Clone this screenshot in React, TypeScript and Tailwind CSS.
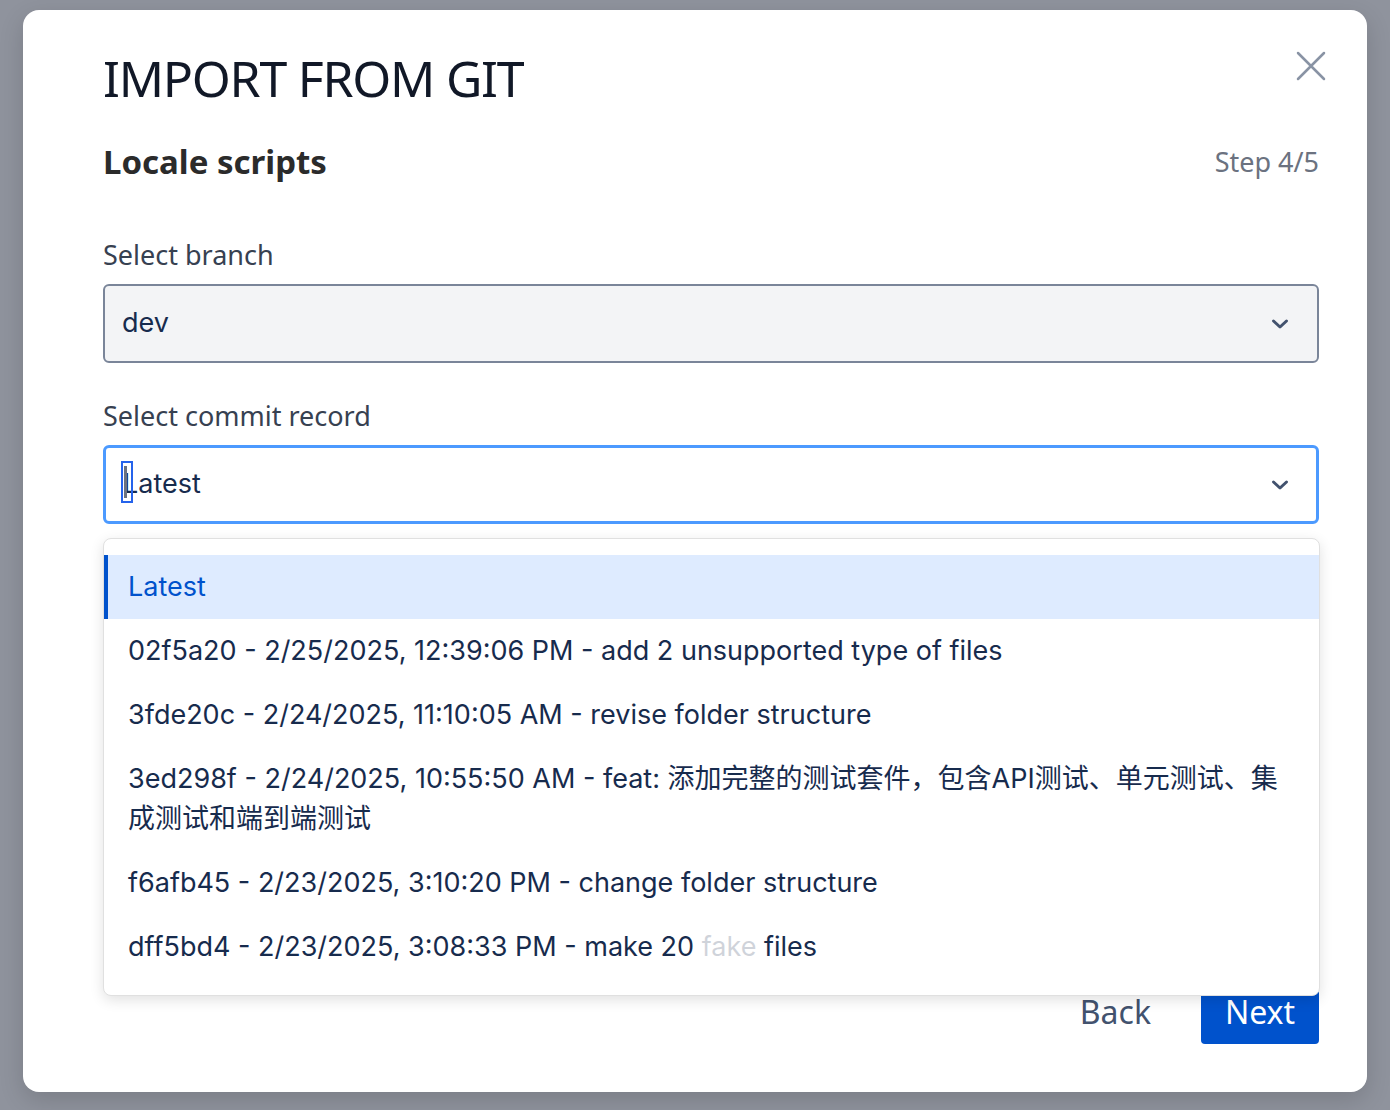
import React from "react";

const commits = [
  { id: "latest", lines: ["Latest"], selected: true },
  { id: "02f5a20", lines: ["02f5a20 - 2/25/2025, 12:39:06 PM - add 2 unsupported type of files"] },
  { id: "3fde20c", lines: ["3fde20c - 2/24/2025, 11:10:05 AM - revise folder structure"] },
  {
    id: "3ed298f",
    lines: [
      "3ed298f - 2/24/2025, 10:55:50 AM - feat: 添加完整的测试套件，包含API测试、单元测试、集",
      "成测试和端到端测试",
    ],
  },
  { id: "f6afb45", lines: ["f6afb45 - 2/23/2025, 3:10:20 PM - change folder structure"] },
];

const heading = { fontFamily: '"Noto Sans", "Open Sans", sans-serif' };
const body = { fontFamily: 'Inter, "Noto Sans CJK SC", sans-serif' };

function Chevron() {
  return (
    <svg width="18" height="12" viewBox="0 0 18 12" className="shrink-0">
      <path d="M2.5 3 L9 9 L15.5 3" fill="none" stroke="#42526e" strokeWidth="3" strokeLinecap="round" strokeLinejoin="round" />
    </svg>
  );
}

export default function App() {
  return (
    <div className="min-h-[1110px] w-[1390px] bg-[#8f939d] pt-[10px] pl-[23px]">
      <div className="relative w-[1344px] h-[1082px] rounded-[16px] bg-white pl-[80px] pr-[48px] pt-[36px] shadow-[0_8px_24px_rgba(0,0,0,0.15)]">
        {/* Close */}
        <button className="absolute right-[40px] top-[40px]">
          <svg width="32" height="32" viewBox="0 0 32 32">
            <path d="M3 3 L29 29 M29 3 L3 29" stroke="#8993a4" strokeWidth="2.5" strokeLinecap="round" />
          </svg>
        </button>

        <h1 style={heading} className="text-[50px] leading-[64px] text-[#111827] tracking-tight">
          IMPORT FROM GIT
        </h1>

        <div className="mt-[32px] flex items-center justify-between">
          <h2 style={heading} className="text-[33px] font-bold text-[#2b2b2b] leading-[40px]">
            Locale scripts
          </h2>
          <span style={heading} className="text-[27px] text-[#6b7280] leading-[40px]">
            Step 4/5
          </span>
        </div>

        {/* Branch */}
        <label style={heading} className="block mt-[53px] text-[27px] leading-[40px] text-[#374151]">
          Select branch
        </label>
        <div className="mt-[9px] h-[79px] rounded-[6px] border-2 border-[#7a8599] bg-[#f3f4f6] flex items-center justify-between pl-[17px] pr-[28px]">
          <span style={body} className="text-[27px] text-[#172b4d]">dev</span>
          <Chevron />
        </div>

        {/* Commit */}
        <label style={heading} className="block mt-[33px] text-[27px] leading-[40px] text-[#374151]">
          Select commit record
        </label>
        <div className="relative mt-[9px] h-[79px] rounded-[6px] border-[3px] border-[#4c9aff] bg-white flex items-center justify-between pl-[17px] pr-[27px]">
          <span style={body} className="relative text-[27px] text-[#172b4d]">
            Latest
            <span className="absolute left-[-2px] top-[-3px] w-[12px] h-[42px] border-2 border-[#2563eb]">
              <span className="absolute left-[1px] top-[3px] w-[3px] h-[32px] bg-[#6b7280]" />
            </span>
          </span>
          <Chevron />
        </div>

        {/* Footer */}
        <div className="absolute right-[48px] bottom-[48px] flex items-center gap-[50px]">
          <span style={heading} className="text-[32px] text-[#42526e]">Back</span>
          <button style={heading} className="h-[64px] w-[118px] rounded-[4px] bg-[#0052cc] text-[32px] text-white">
            Next
          </button>
        </div>

        {/* Dropdown */}
        <div
          style={body}
          className="absolute left-[80px] top-[528px] w-[1217px] rounded-[8px] border border-[#e0e0e0] bg-white py-[16px] shadow-[0_4px_14px_rgba(0,0,0,0.12)] text-[27px] text-[#172b4d]"
        >
          {commits.map((c) =>
            c.selected ? (
              <div key={c.id} className="h-[64px] flex items-center border-l-4 border-[#0052cc] bg-[#deebff] pl-[20px] text-[#0052cc]">
                {c.lines[0]}
              </div>
            ) : (
              <div key={c.id} className="py-[12px] px-[24px] leading-[40px]">
                {c.lines.map((l, i) => (
                  <div key={i} className="whitespace-nowrap">{l}</div>
                ))}
              </div>
            )
          )}
          <div className="py-[12px] px-[24px] leading-[40px] whitespace-nowrap">
            dff5bd4 - 2/23/2025, 3:08:33 PM - make 20 <span className="opacity-20">fake</span> files
          </div>
        </div>
      </div>
    </div>
  );
}
